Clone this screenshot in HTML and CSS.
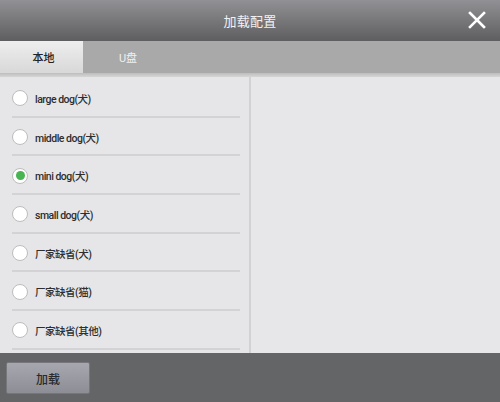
FILE: index.html
```html
<!DOCTYPE html>
<html>
<head>
<meta charset="utf-8">
<link rel="stylesheet" href="styles.css">
</head>
<body>
<div class="app">
  <header class="header">
    <div class="title">加载配置</div>
    <button class="close" aria-label="close">
      <svg width="18" height="18" viewBox="0 0 18 18"><path d="M2 2 L16 16 M16 2 L2 16" stroke="#fff" stroke-width="2.6" stroke-linecap="square"/></svg>
    </button>
  </header>
  <nav class="tabs">
    <div class="tab active">本地</div>
    <div class="tab">U盘</div>
  </nav>
  <div class="tabline"></div>
  <main class="content">
    <ul class="list">
      <li class="row"><span class="radio"></span><span class="label">large dog(犬)</span></li>
      <li class="row"><span class="radio"></span><span class="label">middle dog(犬)</span></li>
      <li class="row"><span class="radio checked"></span><span class="label">mini dog(犬)</span></li>
      <li class="row"><span class="radio"></span><span class="label">small dog(犬)</span></li>
      <li class="row"><span class="radio"></span><span class="label">厂家缺省(犬)</span></li>
      <li class="row"><span class="radio"></span><span class="label">厂家缺省(猫)</span></li>
      <li class="row"><span class="radio"></span><span class="label">厂家缺省(其他)</span></li>
    </ul>
    <div class="divider"></div>
    <section class="detail"></section>
  </main>
  <footer class="footer">
    <button class="btn">加载</button>
  </footer>
</div>
</body>
</html>
```
FILE: styles.css
```css
* { box-sizing: border-box; }
html, body { margin: 0; padding: 0; }
body {
  width: 500px;
  height: 402px;
  overflow: hidden;
  font-family: Roboto, "Noto Sans CJK SC", sans-serif;
  background: #e6e6e8;
}
.app {
  width: 500px;
  height: 402px;
  display: flex;
  flex-direction: column;
}
.header {
  height: 41px;
  flex: none;
  display: flex;
  align-items: center;
  justify-content: center;
  position: relative;
  background: linear-gradient(#919195, #5e5e60);
}
.title {
  color: #f2f2f2;
  font-size: 13px;
  letter-spacing: 0.3px;
}
.close {
  position: absolute;
  right: 14px;
  top: 11px;
  width: 18px;
  height: 18px;
  padding: 0;
  border: 0;
  background: none;
  display: flex;
}
.tabs {
  height: 32px;
  flex: none;
  display: flex;
  background: #a9a9a9;
}
.tab {
  width: 84px;
  display: flex;
  align-items: center;
  justify-content: center;
  font-size: 11px;
  color: #3a3a3a;
  padding-left: 4px;
}
.tab.active {
  width: 83px;
  background: linear-gradient(#eeeeee, #d8d8d8);
  color: #222;
  font-weight: 500;
}
.tab + .tab {
  width: 90px;
  color: #f0f0f0;
  padding-left: 0;
}
.tabline {
  height: 4px;
  flex: none;
  background: linear-gradient(#bdbdbd, #d6d6d6);
}
.content {
  flex: 1;
  display: flex;
  background: #e6e6e8;
}
.list {
  list-style: none;
  margin: 0;
  padding: 2px 9px 0 12px;
  width: 249px;
  flex: none;
}
.row {
  height: 38.7px;
  display: flex;
  align-items: center;
  gap: 7px;
  border-bottom: 2px solid #d3d3d5;
  padding-top: 2px;
}
.radio {
  width: 16px;
  height: 16px;
  border-radius: 50%;
  background: #fff;
  border: 1.5px solid #bdbdbd;
  flex: none;
  display: flex;
  align-items: center;
  justify-content: center;
}
.radio.checked::after {
  content: "";
  width: 9px;
  height: 9px;
  border-radius: 50%;
  background: #48b452;
}
.label {
  font-size: 10.5px;
  font-weight: 500;
  color: #2e2e2e;
  letter-spacing: -0.5px;
}
.divider {
  width: 2px;
  flex: none;
  background: #d2d2d4;
}
.detail {
  flex: 1;
  background: #e7e7e9;
}
.footer {
  height: 49px;
  flex: none;
  background: #646567;
  padding: 9px 0 0 6px;
}
.btn {
  width: 84px;
  height: 32px;
  border: 1px solid #76767c;
  border-radius: 2px;
  background: linear-gradient(#a7a7af, #8d8d95);
  font-family: inherit;
  font-size: 12px;
  font-weight: 500;
  color: #2a2a2a;
  padding: 0;
}
```
